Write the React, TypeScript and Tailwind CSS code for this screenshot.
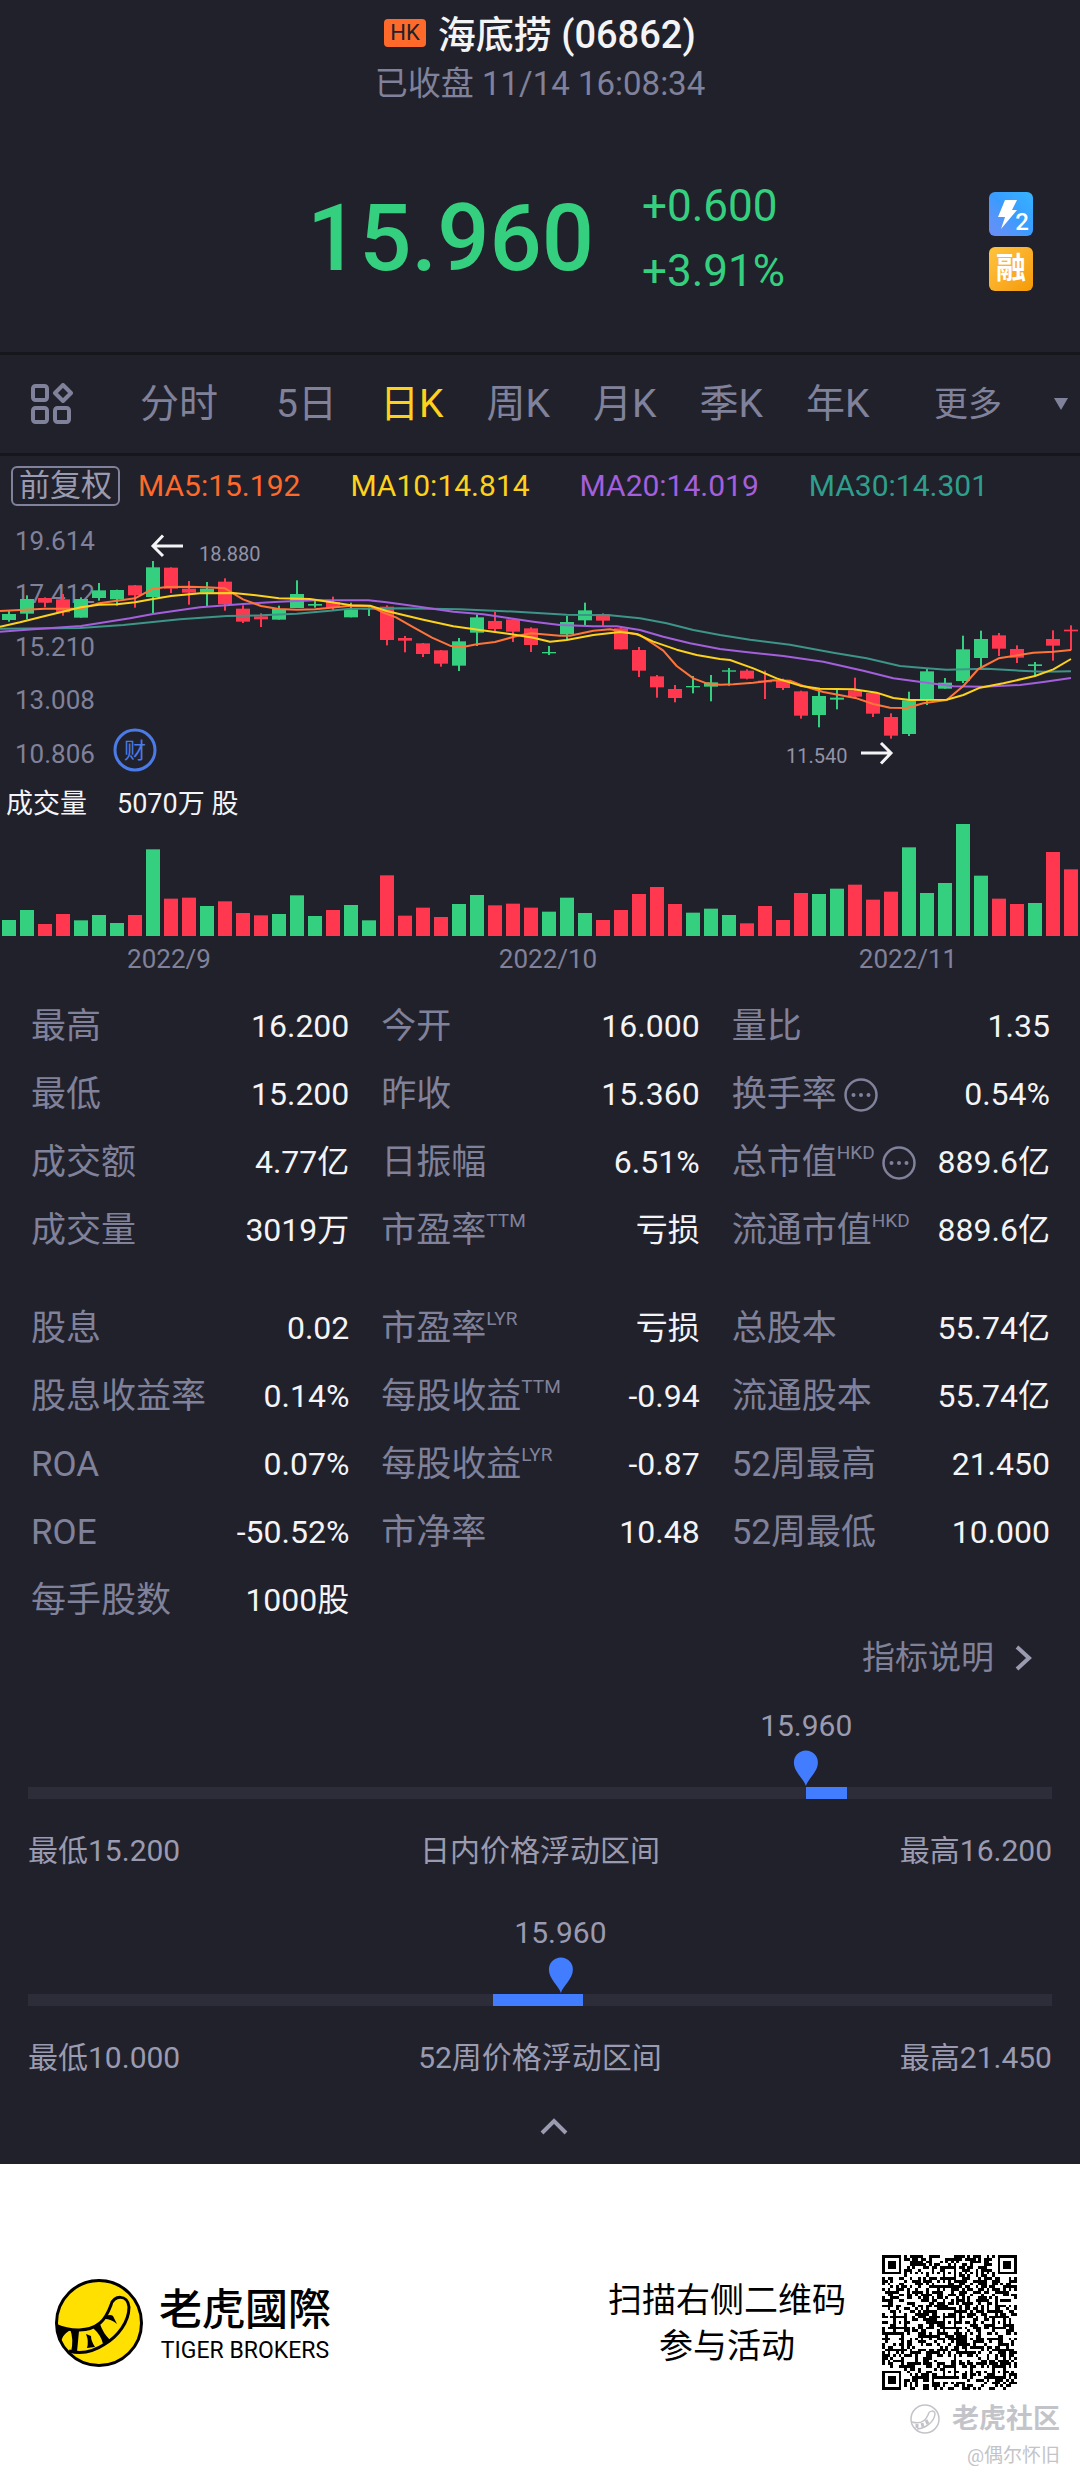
import { useState } from "react";

type Candle = ["g" | "r", number, number, number, number, number];

// [direction, high, body top, body bottom, low, volume top]
const candles: Candle[] = [
  ["g", 270, 282, 300, 305, 1200],
  ["g", 226, 237, 281, 298, 1170],
  ["r", 232, 234, 248, 262, 1212],
  ["r", 222, 238, 277, 287, 1182],
  ["g", 232, 237, 293, 293, 1201],
  ["g", 189, 211, 234, 242, 1185],
  ["g", 209, 210, 238, 257, 1209],
  ["r", 195, 196, 226, 263, 1185],
  ["g", 123, 142, 231, 279, 988],
  ["r", 142, 143, 206, 219, 1136],
  ["r", 183, 206, 218, 254, 1133],
  ["g", 186, 206, 218, 258, 1158],
  ["r", 175, 185, 253, 272, 1144],
  ["r", 256, 266, 305, 309, 1179],
  ["r", 280, 289, 298, 321, 1186],
  ["g", 257, 267, 299, 299, 1182],
  ["g", 181, 222, 264, 264, 1126],
  ["g", 243, 252, 257, 263, 1188],
  ["r", 230, 246, 262, 270, 1170],
  ["g", 248, 268, 292, 292, 1155],
  ["g", 262, 264, 268, 288, 1201],
  ["r", 256, 260, 360, 376, 1066],
  ["r", 348, 354, 362, 397, 1187],
  ["r", 369, 370, 402, 411, 1163],
  ["r", 390, 391, 431, 440, 1191],
  ["g", 354, 364, 437, 453, 1152],
  ["g", 283, 292, 338, 378, 1125],
  ["r", 276, 303, 327, 339, 1156],
  ["r", 297, 298, 335, 366, 1151],
  ["r", 322, 325, 375, 396, 1163],
  ["g", 378, 396, 400, 405, 1175],
  ["g", 288, 306, 343, 360, 1133],
  ["g", 248, 271, 301, 316, 1179],
  ["r", 280, 282, 302, 320, 1200],
  ["r", 320, 325, 388, 388, 1170],
  ["r", 381, 390, 452, 471, 1122],
  ["r", 465, 469, 502, 533, 1101],
  ["r", 495, 507, 534, 547, 1152],
  ["g", 468, 498, 502, 520, 1178],
  ["g", 465, 487, 500, 544, 1166],
  ["g", 444, 451, 455, 497, 1185],
  ["r", 448, 452, 476, 478, 1210],
  ["r", 452, 482, 487, 537, 1158],
  ["r", 476, 480, 504, 510, 1200],
  ["r", 512, 514, 587, 596, 1119],
  ["g", 505, 528, 585, 622, 1122],
  ["g", 510, 533, 539, 568, 1106],
  ["r", 473, 511, 530, 536, 1094],
  ["r", 515, 519, 581, 591, 1139],
  ["r", 580, 591, 647, 656, 1115],
  ["g", 515, 541, 642, 648, 982],
  ["g", 446, 454, 537, 555, 1119],
  ["g", 474, 488, 506, 506, 1089],
  ["g", 347, 388, 483, 489, 912],
  ["g", 332, 357, 414, 445, 1067],
  ["r", 339, 346, 386, 408, 1136],
  ["r", 376, 387, 413, 429, 1152],
  ["g", 426, 433, 438, 470, 1149],
  ["r", 331, 357, 377, 422, 996],
  ["r", 316, 329, 334, 391, 1048],
];

const maLines = [
  {
    color: "#3d9488",
    points:
      "0,326 240,324 370,315 540,298 680,288 783,286 890,281 990,272 1050,266 1200,265 1380,268 1550,275 1700,284 1830,286 1920,295 2000,310 2080,330 2160,345 2250,359 2370,374 2500,398 2600,415 2700,438 2780,445 2840,449 2960,446 3060,452 3130,455 3213,454",
  },
  {
    color: "#a45fdc",
    points:
      "0,335 100,328 243,318 390,295 459,282 600,262 729,252 837,245 945,241 1105,241 1160,247 1242,258 1360,275 1450,283 1530,295 1600,305 1680,315 1780,319 1850,319 1920,330 1990,350 2070,370 2160,387 2230,395 2350,408 2470,425 2590,452 2680,475 2780,488 2860,499 2950,500 3060,495 3130,486 3213,474",
  },
  {
    color: "#ff7438",
    points:
      "0,273 135,266 243,266 297,250 405,235 459,206 500,201 567,200 621,202 675,205 729,238 783,258 837,267 891,269 945,268 1053,257 1110,258 1150,278 1188,292 1242,323 1296,353 1350,377 1385,382 1430,373 1485,366 1550,348 1593,340 1680,347 1710,347 1780,332 1830,328 1870,335 1920,345 1990,392 2030,438 2080,475 2120,490 2160,494 2200,493 2260,488 2320,481 2370,482 2410,498 2470,516 2570,535 2620,552 2670,563 2720,564 2770,550 2840,540 2890,498 2935,447 2996,415 3040,408 3100,398 3160,395 3213,390",
  },
  {
    color: "#fcd21c",
    points:
      "0,320 60,307 135,288 243,262 297,254 351,253 405,247 459,237 513,228 600,220 700,219 760,225 837,235 930,237 990,246 1053,256 1110,257 1160,273 1270,299 1360,319 1440,330 1530,342 1600,353 1650,365 1700,360 1780,345 1860,336 1910,342 1960,365 2030,389 2090,405 2160,417 2190,420 2260,445 2330,475 2400,497 2460,506 2560,508 2630,518 2680,534 2730,540 2840,539 2890,525 2940,503 3010,490 3105,468 3160,448 3213,417",
  },
];

const axis = [
  ["19.614", 30],
  ["17.412", 83],
  ["15.210", 136],
  ["13.008", 189],
  ["10.806", 243],
] as const;

const periods = ["5日", "日K", "周K", "月K", "季K", "年K"];

type Stat = { label: string; sup?: string; info?: boolean; value: string };

const basicStats: Stat[] = [
  { label: "最高", value: "16.200" },
  { label: "今开", value: "16.000" },
  { label: "量比", value: "1.35" },
  { label: "最低", value: "15.200" },
  { label: "昨收", value: "15.360" },
  { label: "换手率", info: true, value: "0.54%" },
  { label: "成交额", value: "4.77亿" },
  { label: "日振幅", value: "6.51%" },
  { label: "总市值", sup: "HKD", info: true, value: "889.6亿" },
  { label: "成交量", value: "3019万" },
  { label: "市盈率", sup: "TTM", value: "亏损" },
  { label: "流通市值", sup: "HKD", value: "889.6亿" },
];

const moreStats: Stat[] = [
  { label: "股息", value: "0.02" },
  { label: "市盈率", sup: "LYR", value: "亏损" },
  { label: "总股本", value: "55.74亿" },
  { label: "股息收益率", value: "0.14%" },
  { label: "每股收益", sup: "TTM", value: "-0.94" },
  { label: "流通股本", value: "55.74亿" },
  { label: "ROA", value: "0.07%" },
  { label: "每股收益", sup: "LYR", value: "-0.87" },
  { label: "52周最高", value: "21.450" },
  { label: "ROE", value: "-50.52%" },
  { label: "市净率", value: "10.48" },
  { label: "52周最低", value: "10.000" },
  { label: "每手股数", value: "1000股" },
];

function StatGrid({ items }: { items: Stat[] }) {
  return (
    <dl className="grid grid-cols-3 gap-x-8 pr-[30px] pl-[31px]">
      {items.map(item => (
        <div key={item.label + (item.sup ?? "")} className="flex h-[68px] items-center justify-between">
          <dt className="flex items-center pt-0.5 text-[#80819a]">
            <span className="text-[35px] leading-[48px]">{item.label}</span>
            {item.sup && <span className="mb-5 text-[19px] leading-6">{item.sup}</span>}
            {item.info && (
              <button type="button" aria-label={`${item.label}说明`} className="ml-1.5">
                <svg width="36" height="36" viewBox="0 0 36 36" className="block">
                  <circle cx="18" cy="18" r="15.5" fill="none" stroke="currentColor" strokeWidth="2.5" />
                  <circle cx="10.5" cy="18" r="2" fill="currentColor" />
                  <circle cx="18" cy="18" r="2" fill="currentColor" />
                  <circle cx="25.5" cy="18" r="2" fill="currentColor" />
                </svg>
              </button>
            )}
          </dt>
          <dd className="text-[32px] leading-[48px] text-[#f4f4f7]">{item.value}</dd>
        </div>
      ))}
    </dl>
  );
}

function PriceChart() {
  return (
    <svg viewBox="0 0 1080 460" className="block w-full" role="img" aria-label="日K">
      <g fill="#80819a" fontSize="26">
        {axis.map(([label, y]) => (
          <text key={label} x="15" y={y}>
            {label}
          </text>
        ))}
        <text x="169" y="448" textAnchor="middle">
          2022/9
        </text>
        <text x="548" y="448" textAnchor="middle">
          2022/10
        </text>
        <text x="908" y="448" textAnchor="middle">
          2022/11
        </text>
      </g>

      <g transform="scale(0.33333)">
        {candles.map(([dir, high, top, bottom, low, vol], i) => {
          const x = 27 + i * 54;
          const color = dir === "g" ? "#35d07f" : "#ff384f";
          return (
            <g key={i} fill={color}>
              <rect x={x - 3} y={high} width="6" height={low - high} />
              <rect x={x - 21} y={top} width="42" height={bottom - top} />
              <rect x={x - 21} y={vol} width="42" height={1248 - vol} />
            </g>
          );
        })}
        {maLines.map(line => (
          <polyline
            key={line.color}
            points={line.points}
            fill="none"
            stroke={line.color}
            strokeWidth="6"
            strokeLinejoin="round"
          />
        ))}
      </g>

      {/* 最高 / 最低价标记 */}
      <g fill="none" stroke="#f4f4f7" strokeWidth="3">
        <path d="M183 26H154M163 15.500L153 26L163 36" />
        <path d="M861 233H890M881 223L891 233L881 243.500" />
      </g>
      <g fill="#9293a6" fontSize="20">
        <text x="199" y="41">
          18.880
        </text>
        <text x="786" y="243">
          11.540
        </text>
      </g>

      <circle cx="135" cy="230" r="20" fill="none" stroke="#4b7be6" strokeWidth="3" />
      <text x="135" y="238" fontSize="22" fill="#4b7be6" textAnchor="middle">
        财
      </text>

      <g fill="#f4f4f7" fontSize="27">
        <text x="6" y="293">
          成交量
        </text>
        <text x="117" y="293">
          5070万 股
        </text>
      </g>
    </svg>
  );
}

type RangeProps = {
  title: string;
  low: string;
  high: string;
  pin: number;
  from: number;
  to: number;
};

function PriceRange({ title, low, high, pin, from, to }: RangeProps) {
  return (
    <section className="px-7 text-[30px] leading-10 text-[#9a9bb0]">
      <div className="relative h-[93px]">
        <div className="absolute top-0 flex -translate-x-1/2 flex-col items-center gap-1" style={{ left: `${pin}%` }}>
          <span>15.960</span>
          <svg width="26" height="36" viewBox="0 0 26 36" className="block">
            <path d="M13 36C11 29 1 22 1 12.500A12 12 0 0 1 25 12.500C25 22 15 29 13 36Z" fill="#437dff" />
          </svg>
        </div>
        <div className="absolute inset-x-0 bottom-0 h-3 bg-[#2d2d39]">
          <div className="h-full bg-[#437dff]" style={{ marginLeft: `${from}%`, width: `${to - from}%` }} />
        </div>
      </div>
      <div className="mt-8 flex justify-between">
        <span>最低{low}</span>
        <span>{title}</span>
        <span>最高{high}</span>
      </div>
    </section>
  );
}

const QR_SIZE = 49;

function inSquare(x: number, y: number, cx: number, cy: number, r: number) {
  return Math.max(Math.abs(x - cx), Math.abs(y - cy)) <= r;
}

function qrPath() {
  const finders = [
    [3, 3],
    [45, 3],
    [3, 45],
  ];
  const aligns = [
    [24, 6],
    [6, 24],
    [24, 24],
    [42, 24],
    [24, 42],
    [42, 42],
  ];
  let seed = 6862;
  let d = "";
  for (let y = 0; y < QR_SIZE; y++) {
    for (let x = 0; x < QR_SIZE; x++) {
      seed = (seed * 1103515245 + 12345) % 2147483648;
      let on = seed / 2147483648 < 0.5;
      if (x === 6 || y === 6) on = (x + y) % 2 === 0;
      for (const [cx, cy] of aligns) {
        if (inSquare(x, y, cx, cy, 2)) on = !inSquare(x, y, cx, cy, 1) || (x === cx && y === cy);
      }
      for (const [cx, cy] of finders) {
        if (inSquare(x, y, cx, cy, 4)) {
          const r = Math.max(Math.abs(x - cx), Math.abs(y - cy));
          on = r === 3 || r <= 1;
        }
      }
      if (on) d += `M${x} ${y}h1v1h-1z`;
    }
  }
  return d;
}

function TigerLogo() {
  return (
    <svg width="88" height="88" viewBox="0 0 88 88" className="block">
      <clipPath id="coin">
        <circle cx="44" cy="44" r="43" />
      </clipPath>
      <circle cx="44" cy="44" r="42.500" fill="#ffe000" />
      <g clipPath="url(#coin)">
        <path
          d="M0 46C16 53 34 53 45 44C50 40 53 34 56 26C58 16 73 15 74 28C74 43 63 57 50 65C38 73 25 75 14 72"
          fill="none"
          stroke="#000"
          strokeWidth="3"
        />
        <path d="M0 45L16 51C11 53 7 57 6 64L0 58Z" />
        <path d="M15 50L24 52L22 73L16 73Q19 60 15 50Z" />
        <path d="M31 55Q34 62 32 69L40 68Q36 62 36 57Z" />
        <path d="M38 49L45 45Q48 54 55 61L48 65Q46 56 38 49Z" />
        <path d="M50 37Q56 35 58 37L62 45Q56 40 50 40Z" />
      </g>
      <circle cx="44" cy="44" r="42.500" fill="none" stroke="#000" strokeWidth="3" />
    </svg>
  );
}

export default function App() {
  const [period, setPeriod] = useState("日K");

  const tabClass = (name: string) => (name === period ? "text-[#fcd21c]" : "text-[#80819a]");

  return (
    <main className="w-full bg-[#21212b] font-[Roboto,'Noto_Sans_CJK_SC',sans-serif]">
      <header className="relative border-b-3 border-[#16161d] pt-3 pb-[61px]">
        <div className="flex h-[46px] items-center justify-center">
          <span className="mr-3 mb-1 rounded bg-[#ff6a2b] px-1.5 text-[22px] leading-7 text-[#21212b]">HK</span>
          <h1 className="text-[38px] leading-[46px] font-medium text-[#f4f4f7]">海底捞 (06862)</h1>
        </div>
        <p className="mt-1.5 text-center text-[33px] leading-10 text-[#80819a]">已收盘 11/14 16:08:34</p>
        <div className="mt-[83px] flex h-[104px] items-center justify-center gap-12 pl-3 text-[#35d07f]">
          <span className="text-[92px] leading-[104px] font-medium">15.960</span>
          <div className="flex flex-col gap-4 text-[44px] leading-[49px]">
            <span>+0.600</span>
            <span>+3.91%</span>
          </div>
        </div>
        <div className="absolute right-[47px] bottom-[61px] flex flex-col gap-[11px]">
          <span className="relative block size-11 overflow-hidden rounded-md bg-linear-to-tr from-[#6b8df5] via-[#3a9bff] to-[#35b4ff] text-white">
            <svg viewBox="0 0 44 44" className="block size-11">
              <path d="M16 8H28L23 18H28L12 37L16 25H9Z" fill="#fff" />
            </svg>
            <span className="absolute right-1 bottom-1 text-[24px] leading-5 font-medium">2</span>
          </span>
          <span className="block size-11 rounded-md bg-linear-to-br from-[#ffc43d] to-[#f59a00] text-center text-[30px] leading-[42px] font-bold text-white">
            融
          </span>
        </div>
      </header>

      <nav className="flex h-[101px] items-center border-b-3 border-[#16161d] pr-3 pl-[31px] text-[39px] leading-[52px] text-[#80819a]">
        <button type="button" aria-label="指标">
          <svg width="42" height="42" viewBox="0 0 42 42" fill="none" stroke="currentColor" strokeWidth="4">
            <rect x="2" y="3" width="14" height="14" rx="2.500" />
            <path d="M32 2L40 10L32 18L24 10Z" strokeLinejoin="round" />
            <rect x="2" y="25" width="14" height="14" rx="2.500" />
            <rect x="24" y="25" width="14" height="14" rx="2.500" />
          </svg>
        </button>
        <button type="button" className={`ml-[67px] ${tabClass("分时")}`} onClick={() => setPeriod("分时")}>
          分时
        </button>
        <div className="ml-[58px] flex gap-[43px]">
          {periods.map(name => (
            <button key={name} type="button" className={tabClass(name)} onClick={() => setPeriod(name)}>
              {name}
            </button>
          ))}
        </div>
        <button type="button" className="ml-auto flex items-center gap-[52px] text-[34px]">
          更多
          <svg width="14" height="12" viewBox="0 0 14 12" fill="currentColor">
            <path d="M0 0H14L7 12Z" />
          </svg>
        </button>
      </nav>

      <div className="flex h-16 items-center pb-1 pl-[11px]">
        <button
          type="button"
          className="rounded-md border-2 border-[#80819a] px-1.5 text-[31px] leading-9 text-[#9a9bb0]"
        >
          前复权
        </button>
        <div className="ml-[18px] flex gap-[50px] text-[30px] leading-9">
          <span className="text-[#ff6a2b]">MA5:15.192</span>
          <span className="text-[#fcd21c]">MA10:14.814</span>
          <span className="text-[#a45fdc]">MA20:14.019</span>
          <span className="text-[#2f9f8c]">MA30:14.301</span>
        </div>
      </div>

      <PriceChart />

      <div className="mt-3 flex flex-col gap-[30px]">
        <StatGrid items={basicStats} />
        <StatGrid items={moreStats} />
      </div>

      <div className="flex justify-end pr-12">
        <a href="#indicators" className="flex h-12 items-center gap-5 text-[33px] leading-[48px] text-[#80819a]">
          指标说明
          <svg width="18" height="26" viewBox="0 0 18 26" fill="none" stroke="#9a9bb0" strokeWidth="4">
            <path d="M3 2L15 13L3 24" />
          </svg>
        </a>
      </div>

      <div className="mt-6 flex flex-col gap-[42px]">
        <PriceRange title="日内价格浮动区间" low="15.200" high="16.200" pin={76} from={76} to={80} />
        <PriceRange title="52周价格浮动区间" low="10.000" high="21.450" pin={52} from={45.4} to={54.2} />
      </div>

      <div className="mt-6 flex justify-center pb-3.5 pl-7">
        <button type="button" aria-label="收起" className="flex h-12 items-center">
          <svg width="28" height="18" viewBox="0 0 28 18" fill="none" stroke="#9a9bb0" strokeWidth="4">
            <path d="M2 16L14 4L26 16" />
          </svg>
        </button>
      </div>

      <footer className="bg-white pt-[91px] pb-[11px] text-black">
        <div className="flex items-center pr-[63px] pl-[55px]">
          <TigerLogo />
          <div className="ml-4 text-center">
            <p className="font-['Noto_Sans_CJK_TC',sans-serif] text-[43px] leading-[50px] font-medium">老虎國際</p>
            <p className="mt-1.5 text-[23px] leading-7">TIGER BROKERS</p>
          </div>
          <p className="ml-auto text-center text-[34px] leading-[46px]">
            扫描右侧二维码
            <br />
            参与活动
          </p>
          <svg viewBox="0 0 49 49" className="ml-9 block size-[135px]" shapeRendering="crispEdges">
            <path d={qrPath()} />
          </svg>
        </div>
        <div className="mt-3.5 flex flex-col items-end gap-2 pr-5 text-[#c3c4c9]">
          <div className="flex items-center gap-3">
            <svg width="30" height="30" viewBox="0 0 30 30" fill="none" stroke="currentColor" strokeWidth="1.500">
              <circle cx="15" cy="15" r="14" />
              <path d="M2 18C9 20 15 18 18 11C19 6 25 6 25 10C24 18 16 24 7 25" />
              <path d="M7 20V24M12 19L13 23M16 16L18 20" strokeWidth="3" />
            </svg>
            <span className="text-[27px] leading-[30px] font-bold">老虎社区</span>
          </div>
          <span className="text-[19px] leading-7">@偶尔怀旧</span>
        </div>
      </footer>
    </main>
  );
}
